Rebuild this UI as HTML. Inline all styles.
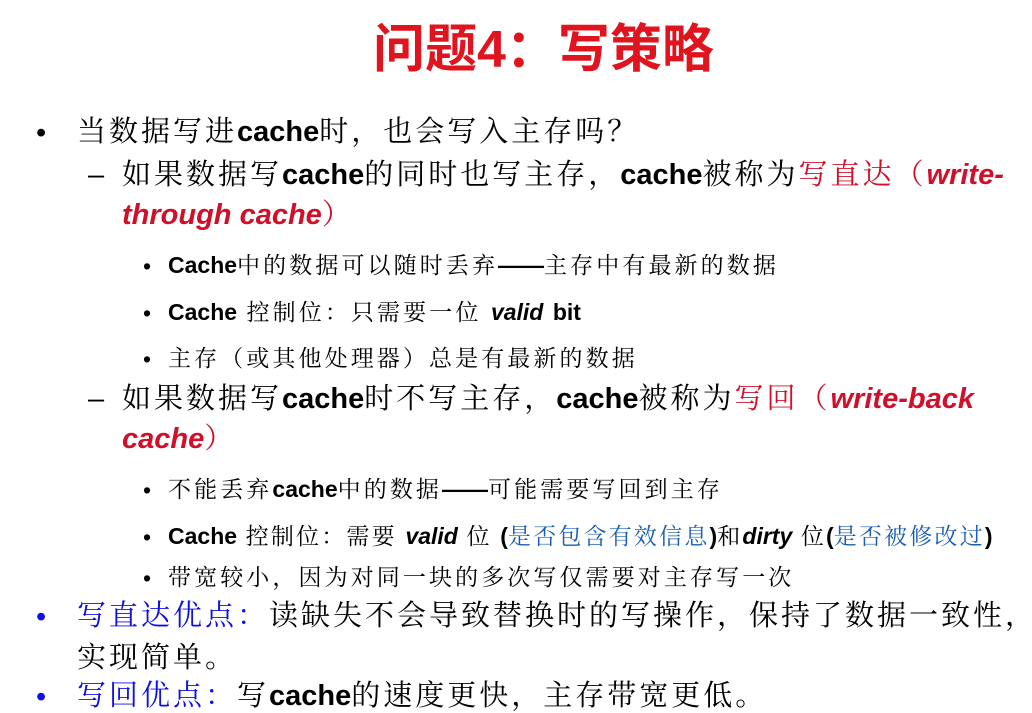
<!DOCTYPE html>
<html><head><meta charset="utf-8"><style>
body{margin:0;width:1032px;height:711px;background:#fff;position:relative;overflow:hidden;font-family:"Liberation Sans","Noto Serif CJK SC",serif;color:#000}
.l{position:absolute;white-space:nowrap;line-height:1}
.t{left:373px;top:24px;font-size:52px;font-weight:bold;color:#e0141e;font-family:"Liberation Sans","Noto Sans CJK SC",sans-serif}
.b1{font-size:29px;letter-spacing:3px}
.b2{font-size:23px;letter-spacing:3.1px}
.e{font-weight:bold;letter-spacing:0}
.r{color:#d0102a}
.ri{color:#d0102a;font-style:italic;font-weight:bold;letter-spacing:0}
.bl{color:#1a5fb4}
.bu{color:#1010e0}
b{letter-spacing:0}
</style></head><body>
<div class="l t">问题4：写策略</div>

<div class="l b1" style="left:36px;top:119px">•</div>
<div class="l b1" style="left:77px;top:118px">当数据写进<span class="e">cache</span>时，也会写入主存吗？</div>

<div class="l b1" style="left:88px;top:161px">–</div>
<div class="l b1" style="left:122px;top:161px">如果数据写<span class="e">cache</span>的同时也写主存，<span class="e">cache</span>被称为<span class="r">写直达（</span><span class="ri">write-</span></div>
<div class="l b1" style="left:122px;top:201px"><span class="ri">through cache</span><span class="r">）</span></div>

<div class="l b2" style="left:143px;top:255px">•</div>
<div class="l b2" style="left:168px;top:254px"><span class="e">Cache</span>中的数据可以随时丢弃<b>——</b>主存中有最新的数据</div>
<div class="l b2" style="left:143px;top:302px">•</div>
<div class="l b2" style="left:168px;top:301px"><span class="e">Cache</span> 控制位：只需要一位 <b><i>valid</i></b> <b>bit</b></div>
<div class="l b2" style="left:143px;top:348px">•</div>
<div class="l b2" style="left:168px;top:347px">主存（或其他处理器）总是有最新的数据</div>

<div class="l b1" style="left:88px;top:385px">–</div>
<div class="l b1" style="left:122px;top:385px">如果数据写<span class="e">cache</span>时不写主存，<span class="e">cache</span>被称为<span class="r">写回（</span><span class="ri">write-back</span></div>
<div class="l b1" style="left:122px;top:425px"><span class="ri">cache</span><span class="r">）</span></div>

<div class="l b2" style="left:143px;top:479px">•</div>
<div class="l b2" style="left:168px;top:478px">不能丢弃<span class="e">cache</span>中的数据<b>——</b>可能需要写回到主存</div>
<div class="l b2" style="left:143px;top:526px">•</div>
<div class="l b2" style="left:168px;top:525px;letter-spacing:2.2px"><span class="e">Cache</span> 控制位：需要 <b><i>valid</i></b> 位 <b>(</b><span class="bl">是否包含有效信息</span><b>)</b>和<b><i>dirty</i></b> 位<b>(</b><span class="bl">是否被修改过</span><b>)</b></div>
<div class="l b2" style="left:143px;top:567px">•</div>
<div class="l b2" style="left:168px;top:566px">带宽较小，因为对同一块的多次写仅需要对主存写一次</div>

<div class="l b1" style="left:36px;top:603px;color:#1010e0">•</div>
<div class="l b1" style="left:77px;top:602px"><span class="bu">写直达优点：</span>读缺失不会导致替换时的写操作，保持了数据一致性，</div>
<div class="l b1" style="left:77px;top:644px">实现简单。</div>
<div class="l b1" style="left:36px;top:683px;color:#1010e0">•</div>
<div class="l b1" style="left:77px;top:682px"><span class="bu">写回优点：</span>写<span class="e">cache</span>的速度更快，主存带宽更低。</div>
</body></html>
